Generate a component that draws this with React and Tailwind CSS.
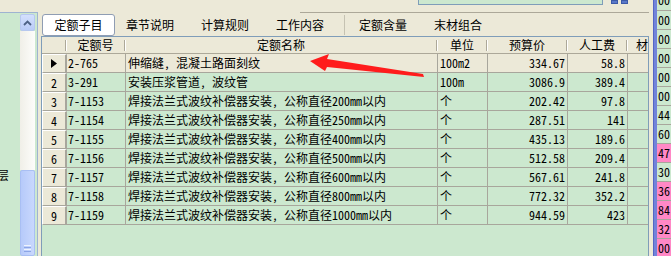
import React from "react";

const rows = [
  ["2-765", "伸缩缝, 混凝土路面刻纹", "100m2", "334.67", "58.8"],
  ["3-291", "安装压浆管道, 波纹管", "100m", "3086.9", "389.4"],
  ["7-1153", "焊接法兰式波纹补偿器安装, 公称直径200mm以内", "个", "202.42", "97.8"],
  ["7-1154", "焊接法兰式波纹补偿器安装, 公称直径250mm以内", "个", "287.51", "141"],
  ["7-1155", "焊接法兰式波纹补偿器安装, 公称直径400mm以内", "个", "435.13", "189.6"],
  ["7-1156", "焊接法兰式波纹补偿器安装, 公称直径500mm以内", "个", "512.58", "209.4"],
  ["7-1157", "焊接法兰式波纹补偿器安装, 公称直径600mm以内", "个", "567.61", "241.8"],
  ["7-1158", "焊接法兰式波纹补偿器安装, 公称直径800mm以内", "个", "772.32", "352.2"],
  ["7-1159", "焊接法兰式波纹补偿器安装, 公称直径1000mm以内", "个", "944.59", "423"],
];

const sideCells = [
  ["00", false], ["00", false], ["00", false], ["00", false], ["00", false],
  ["44", false], ["60", false], ["47", true], ["30", false], ["36", true],
  ["84", true], ["32", true], ["00", true],
];

const font = { fontFamily: '"Noto Sans Mono CJK SC", "Noto Sans CJK SC", monospace' };
const cjk = { fontFamily: '"Noto Sans CJK SC", sans-serif' };

const HeadSep = () => (
  <div className="self-center h-[11px] w-[2px] border-l border-[#aca899] border-r border-r-white shrink-0" />
);

const HeadCell = ({ label }) => (
  <div className="flex items-stretch h-[16px]">
    <div className="flex-1 flex items-center justify-center whitespace-nowrap overflow-hidden">{label}</div>
    <HeadSep />
  </div>
);

export default function App() {
  return (
    <div
      className="relative w-[671px] h-[256px] overflow-hidden bg-[#ece9d8] flex text-[12px] text-black"
      style={font}
    >
      {/* main area */}
      <div className="w-[653px] flex flex-col">
        {/* top strip */}
        <div className="h-[12px] flex shrink-0 relative">
          <div className="w-[418px]" />
          <div className="w-[185px] h-[5px] bg-[#cce8cf] border-l border-r border-b border-[#7f9db9]" />
          <div className="flex gap-[3px] ml-[8px] h-[4px]">
            <div className="w-[7px] h-[4px] bg-[#5a78c8] border border-[#3b5aa8]" />
            <div className="w-[7px] h-[4px] bg-[#5a78c8] border border-[#3b5aa8]" />
          </div>
        </div>

        {/* body */}
        <div className="flex flex-1 min-h-0">
          {/* left panel */}
          <div className="w-[38px] bg-[#cce8cf] border-t border-r border-[#9fb3d1] flex">
            <div className="w-[20px] overflow-hidden">
              <div className="pt-[153px] -ml-[3px] leading-[18px]" style={cjk}>层</div>
            </div>
            <div className="w-[15px] pt-[1px] flex flex-col">
              <div className="h-[17px] shrink-0 rounded-[2px] border border-[#b7c8ef] bg-gradient-to-b from-[#d4e0fd] to-[#b9cbf7] flex items-center justify-center">
                <svg width="9" height="6" viewBox="0 0 9 6">
                  <path d="M1 5 L4.5 1.5 L8 5" fill="none" stroke="#4d6185" strokeWidth="1.8" />
                </svg>
              </div>
              <div className="h-[139px] shrink-0 bg-gradient-to-r from-[#f0efe8] to-[#fdfdfb]" />
              <div className="flex-1 rounded-[2px] border border-[#a9bff3] bg-gradient-to-r from-[#b6cafa] to-[#c9d8fd] flex flex-col justify-end items-center pb-[3px] gap-[1px]">
                <div className="w-[7px] h-[1px] bg-[#eef3fe]" />
                <div className="w-[7px] h-[1px] bg-[#8ca5e6]" />
                <div className="w-[7px] h-[1px] bg-[#eef3fe]" />
                <div className="w-[7px] h-[1px] bg-[#8ca5e6]" />
              </div>
            </div>
          </div>

          <div className="w-[3px]" />

          {/* tabs + grid */}
          <div className="w-[608px] flex flex-col">
            <div className="h-[24px] pt-[2px] flex items-stretch shrink-0 relative" style={cjk}>
              <div className="absolute right-0 top-0 w-[349px] h-[1px] bg-[#aca899]" />
              <div className="ml-[1px] w-[73px] h-[22px] bg-white border border-[#8f9db3] rounded-[3px] flex items-center justify-center">定额子目</div>
              <div className="ml-[11px] flex items-center">章节说明</div>
              <div className="ml-[27px] flex items-center">计算规则</div>
              <div className="ml-[27px] flex items-center">工作内容</div>
              <div className="ml-[20px] w-[1px] bg-[#c5c2b2] my-[1px]" />
              <div className="ml-[14px] flex items-center">定额含量</div>
              <div className="ml-[27px] flex items-center">末材组合</div>
            </div>

            <div className="flex-1 bg-[#cce8cf] border-l border-t border-r border-[#7f9db9]">
              <div className="grid grid-cols-[25px_59px_312px_50px_80px_60px_20px] bg-[#ece9d8] border-b border-[#aca899]" style={cjk}>
                <HeadCell label="" />
                <HeadCell label="定额号" />
                <HeadCell label="定额名称" />
                <HeadCell label="单位" />
                <HeadCell label="预算价" />
                <HeadCell label="人工费" />
                <div className="h-[16px] flex items-center pl-[8px] overflow-hidden whitespace-nowrap">材</div>
              </div>

              {rows.map((r, i) => {
                const bg = i === 0 ? "bg-[#ece9d8]" : "bg-[#cce8cf]";
                const cell = `h-[19px] border-r border-b border-[#a8a69c] flex items-center whitespace-nowrap overflow-hidden ${bg}`;
                return (
                  <div key={r[0]} className="grid grid-cols-[25px_59px_312px_50px_80px_60px_20px]">
                    <div className="h-[19px] bg-[#ece9d8] border-t border-l border-white border-r-2 border-r-[#a8a69c] border-b border-b-[#a8a69c] flex items-center justify-center">
                      {i === 0 ? (
                        <svg width="6" height="9" viewBox="0 0 6 9">
                          <path d="M0 0 L6 4.5 L0 9 Z" fill="#000" />
                        </svg>
                      ) : (
                        i + 1
                      )}
                    </div>
                    <div className={`${cell} pl-[1px]`}>{r[0]}</div>
                    <div className={`${cell} pl-[2px]`}>{r[1]}</div>
                    <div className={`${cell} pl-[2px]`}>{r[2]}</div>
                    <div className={`${cell} justify-end pr-[2px]`}>{r[3]}</div>
                    <div className={`${cell} justify-end pr-[2px]`}>{r[4]}</div>
                    <div className={`${cell} border-r-0`} />
                  </div>
                );
              })}
            </div>
          </div>
        </div>
      </div>

      {/* right edge */}
      <div className="w-[4px] bg-[#7283da] border-l border-[#5566c4]" />
      <div className="flex-1 flex flex-col bg-[#cce8cf] overflow-hidden">
        <div className="h-[11px] shrink-0 border-b border-[#a8a69c] overflow-hidden">
          <div className="-mt-[9px] h-[18px] leading-[18px] pl-[1px]">00</div>
        </div>
        {sideCells.map(([t, pink], i) => (
          <div
            key={i}
            className={`h-[19px] shrink-0 border-b border-[#a8a69c] flex items-center pl-[1px] leading-[18px] ${pink ? "bg-[#ff88c6]" : "bg-[#cce8cf]"}`}
          >
            {t}
          </div>
        ))}
      </div>

      {/* red arrow overlay */}
      <svg className="absolute left-0 top-0 pointer-events-none" width="671" height="256">
        <polygon
          points="310,61 329,54 327,59 423,74 424,77 327,67 325,71"
          fill="#ff1c1c"
        />
      </svg>
    </div>
  );
}
